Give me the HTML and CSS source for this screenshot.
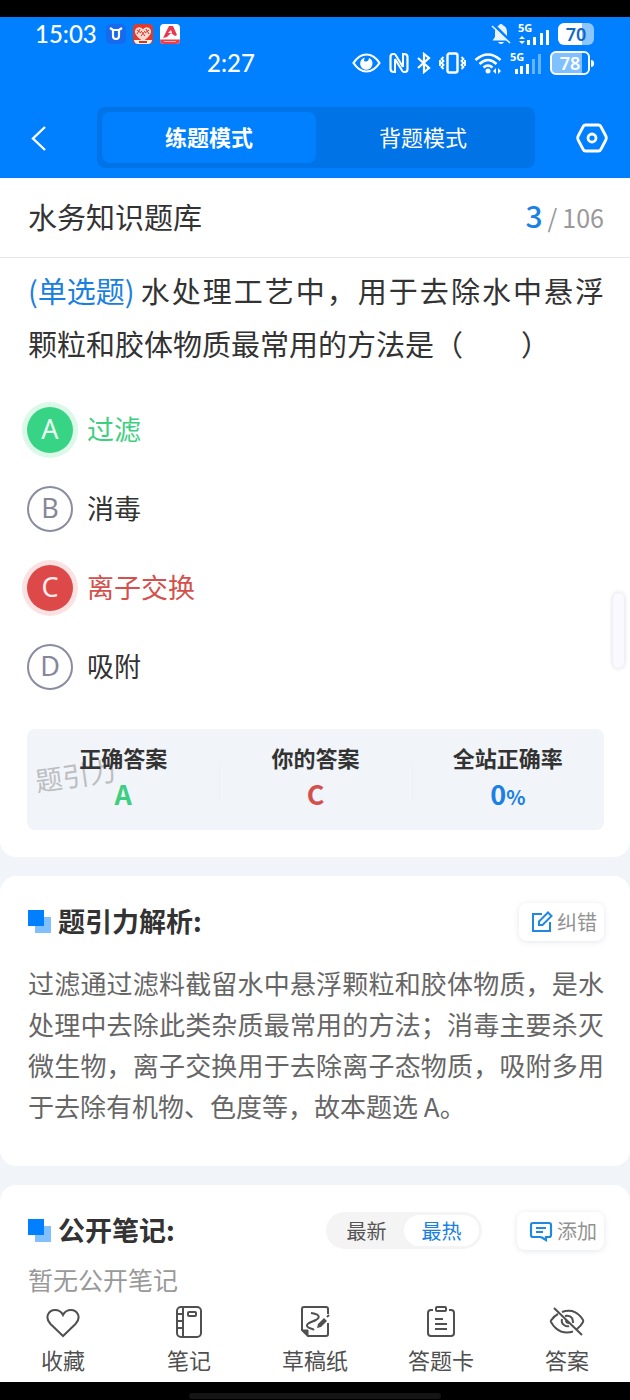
FILE: index.html
```html
<!DOCTYPE html>
<html lang="zh-CN">
<head>
<meta charset="utf-8">
<meta name="viewport" content="width=device-width, initial-scale=1">
<title>水务知识题库</title>
<link rel="stylesheet" href="styles.css">
</head>
<body>
<header class="top">
  <div class="status outer">
    <div class="group">
      <span class="clock">15:03</span>
      <svg class="app" viewBox="0 0 20 20"><rect width="20" height="20" rx="5" fill="#1769ed"/><path d="M4 4l3 2h6l3-2M7 6v6q0 3 3 3t3-3V6" fill="none" stroke="#fff" stroke-width="2.2"/></svg>
      <svg class="app" viewBox="0 0 20 20"><rect width="20" height="20" rx="4" fill="#e03a2c"/><path d="M10 17C2 12 1 8 2.500 5.500 4.500 2 8.500 3 10 5.500 11.500 3 15.500 2 17.500 5.500 19 8 18 12 10 17z" fill="#fbd9cf"/><path d="M4 6l4 3M7 5l-3 5M16 6l-4 3M13 5l3 5M8 7l4 5M12 7l-4 5" stroke="#d8322a" stroke-width="1"/><path d="M1 16h18q-.5 4-4 4H5q-3.500 0-4-4z" fill="#fff0dc"/><path d="M6 18h8" stroke="#d8322a" stroke-width="2"/></svg>
      <svg class="app" viewBox="0 0 20 20"><rect width="20" height="20" rx="4" fill="#fff"/><path d="M3 14L9 2h4l4 9-2 1-4-3-4 4z" fill="#e8384f"/><path d="M8 9l3-3 1 3z" fill="#fff"/><path d="M0 15.500h20q0 4.500-4 4.500H4q-4 0-4-4.500z" fill="#ef3e4a"/><path d="M4 17.500h12" stroke="#fff" stroke-width="1" opacity=".6"/></svg>
    </div>
    <div class="group tight">
      <svg width="20" height="22" viewBox="0 0 20 22"><path d="M10 1q1.500 0 1.800 1.300Q16 4 16 9v5l2.500 3.500h-17L4 14V9Q4 4 8.200 2.300 8.500 1 10 1zM7 19h6q-1 2-3 2t-3-2z" fill="#e9f4ff"/><path d="M2 1l17 17" stroke="#0080ff" stroke-width="3"/><path d="M1 3l18 17" stroke="#e9f4ff" stroke-width="1.600"/></svg>
      <div class="signal"><span class="net">5G</span><svg width="33" height="23" viewBox="0 0 33 23" fill="#fff"><path d="M1 16l3-3 3 3zM1 18l3 3 3-3zM9 17h3v5H9zM15 14h3v8h-3zM22 10h3v12h-3zM28 7h3v15h-3z"/></svg></div>
      <div class="battery full"><span class="charge">70</span></div>
    </div>
  </div>
  <div class="status inner">
    <span class="clock">2:27</span>
    <svg width="29" height="22" viewBox="0 0 29 22"><path d="M1.500 11Q7 2.500 14.500 2.500T27.500 11q-5.500 8.500-13 8.500T1.500 11z" fill="none" stroke="#fff" stroke-width="2.200"/><path d="M13 5.500a6.200 6.200 0 1 0 7.500 5.500Q20 7 17 6q-.5 4-4 3.500-2-.5 0-4z" fill="#fff"/></svg>
    <svg width="20" height="22" viewBox="0 0 20 22" fill="none" stroke="#fff"><path d="M6 2H4Q1.500 2 1.500 5v12q0 3 3.500 3M14 20h2q2.500 0 2.500-3V5Q18.500 2 15 2" stroke-width="2.200"/><path d="M6 21V7M14 15V1" stroke-width="2"/><path d="M6 2l8 13M6 7l8 13" stroke-width="2"/></svg>
    <svg width="14" height="22" viewBox="0 0 14 22" fill="none" stroke="#fff" stroke-width="2.200"><path d="M1 6l11 10-5 4V2l5 4L1 16"/></svg>
    <svg width="27" height="22" viewBox="0 0 27 22" fill="none" stroke="#fff" stroke-width="1.800"><rect x="8.500" y="1.500" width="10" height="19" rx="2" stroke-width="2.400"/><path d="M4.500 5l-2 2 2 2-2 2 2 2-2 2 2 2M22.500 5l2 2-2 2 2 2-2 2 2 2-2 2M1 8v6M26 8v6"/></svg>
    <svg width="28" height="22" viewBox="0 0 28 22" fill="none" stroke="#fff" stroke-width="2.600"><path d="M1.500 8Q14-3 26.500 8M5.500 12Q14 4 22.500 12M9.500 15.500Q14 11.500 18.500 15.500"/><circle cx="14" cy="19" r="2.500" fill="#fff" stroke="none"/><path d="M19 19l3-3v6zM27 19l-3-3v6z" fill="#fff" stroke="none"/></svg>
    <div class="signal"><span class="net">5G</span><svg width="32" height="23" viewBox="0 0 32 23" fill="#fff"><path d="M5 17h3v5H5zM10 14h3v8h-3zM16 12h3v10h-3z"/><path d="M22 7h3v15h-3zM28 2h3v20h-3z" opacity=".4"/></svg></div>
    <div class="battery lined"><span class="charge">78</span></div>
  </div>
  <nav class="modebar">
    <button class="plain" aria-label="返回"><svg width="18" height="28" viewBox="0 0 18 28"><path d="M15 3L3 14.500 15 26" fill="none" stroke="#fff" stroke-width="2.400"/></svg></button>
    <div class="modes"><button class="mode on">练题模式</button><button class="mode">背题模式</button></div>
    <button class="plain end" aria-label="设置"><svg width="32" height="30" viewBox="0 0 32 30" fill="none" stroke="#fff" stroke-width="2.800"><path d="M9.500 2h13q1.500 0 2.300 1.500l5 9.500q1 2 0 4l-5 9.500Q24 28 22.500 28h-13Q8 28 7.200 26.500l-5-9.500q-1-2 0-4l5-9.500Q8 2 9.500 2z"/><circle cx="16" cy="15" r="4"/></svg></button>
  </nav>
</header>

<main class="content">
  <section class="card first">
    <div class="bank"><h1 class="bank-name">水务知识题库</h1><p class="count"><b class="now">3</b><span class="slash">/</span>106</p></div>
    <p class="question"><span class="kind">(单选题)</span>水处理工艺中，用于去除水中悬浮<span class="keep">颗粒</span>和胶体物质最常用的方法是（　　）</p>
    <div class="options">
      <button class="option right"><span class="mark">A</span><span class="label">过滤</span></button>
      <button class="option"><span class="mark">B</span><span class="label">消毒</span></button>
      <button class="option wrong"><span class="mark">C</span><span class="label">离子交换</span></button>
      <button class="option"><span class="mark">D</span><span class="label">吸附</span></button>
    </div>
    <div class="result">
      <dl class="stats">
        <div class="stat"><dt>正确答案</dt><dd class="green">A</dd></div>
        <div class="stat"><dt>你的答案</dt><dd class="red">C</dd></div>
        <div class="stat"><dt>全站正确率</dt><dd class="azure">0<small>%</small></dd></div>
      </dl>
      <span class="watermark">题引力</span>
    </div>
  </section>

  <section class="card">
    <div class="head">
      <svg class="squares" viewBox="0 0 23 23"><path d="M7 7h16v16H7z" fill="#80c0ff"/><path d="M0 0h16v16H0z" fill="#0080ff"/></svg>
      <h2 class="title">题引力解析:</h2>
      <button class="action"><svg width="22" height="22" viewBox="0 0 22 22" fill="none" stroke="#2088e0" stroke-width="2"><path d="M11 3H2v17h17v-9"/><path d="M8 14v-3.500L17 1.500l3.500 3.500-9 9z"/></svg>纠错</button>
    </div>
    <p class="analysis">过滤通过滤料截留水中悬浮颗粒和胶体物质，是水处理中去除此类杂质最常用的方法；消毒主要杀灭微生物，离子交换用于去除离子态物质，吸附多用于去除有机物、色度等，故本题选 A。</p>
  </section>

  <section class="card notes">
    <div class="head">
      <svg class="squares" viewBox="0 0 23 23"><path d="M7 7h16v16H7z" fill="#80c0ff"/><path d="M0 0h16v16H0z" fill="#0080ff"/></svg>
      <h2 class="title">公开笔记:</h2>
      <div class="sort"><button class="pill">最新</button><button class="pill on">最热</button></div>
      <button class="action"><svg width="24" height="22" viewBox="0 0 24 22" fill="none" stroke="#2088e0" stroke-width="2.200"><path d="M12 17H4q-2 0-2-2V5q0-2 2-2h16q2 0 2 2v10q0 2-2 2h-3v3l-5-3M7 8h10M7 12h7"/></svg>添加</button>
    </div>
    <p class="empty">暂无公开笔记</p>
  </section>
</main>

<div class="handle"></div>

<footer class="bottom">
  <nav class="tools">
    <button class="tool"><svg viewBox="0 0 36 36"><path d="M18 32L5.500 20C-1 13 4 6 10 6c4 0 6.500 2 8 5 1.500-3 4-5 8-5 6 0 11 7 4.500 14z"/></svg>收藏</button>
    <button class="tool"><svg viewBox="0 0 36 36"><rect x="6" y="3" width="24" height="30" rx="4"/><path d="M12 3v30M6 10h6M6 17h6M6 24h6"/><rect x="17" y="8" width="8" height="4" rx="1"/></svg>笔记</button>
    <button class="tool"><svg viewBox="0 0 36 36"><path d="M31 10V5q0-2-2-2H7Q5 3 5 5v21l6 6h18q2 0 2-2V19"/><path d="M5 26h6v6z" fill="#505050" stroke-width="1"/><path d="M14 9c8 1 10 4 5 7-4 2-10 3-9 6 1 3 5 2 7 4"/><path d="M20 24l1-4 6-6 3 3-6 6z" fill="#505050" stroke="none"/><path d="M30 13l2-2"/></svg>草稿纸</button>
    <button class="tool"><svg viewBox="0 0 36 36"><path d="M10 6H8Q5 6 5 9v20q0 3 3 3h20q3 0 3-3V9q0-3-3-3h-2"/><rect x="13" y="3" width="10" height="4" rx="1"/><path d="M12 15h8M12 20h12M12 25h12"/></svg>答题卡</button>
    <button class="tool"><svg viewBox="0 0 36 36"><path d="M13 8q5-2 10-1 7 2 11 9 .5 1 0 2-2 4-6 7M9 10q-4 2-7 6.500-.5.500 0 1.500 4 7 10 9.500 6 2 12 0M16 12q5-1 7 2 1 2 1 5M13 15q-1 4 2 6 3 2 5 1M17 16q0 3 3 3M5 4l28 27"/></svg>答案</button>
  </nav>
  <div class="gesture"></div>
</footer>
</body>
</html>
```

FILE: styles.css
```css
* { box-sizing: border-box; }
body {
  margin: 0;
  min-height: 100vh;
  background: #f1f4f8;
  color: #333;
  font-family: "Noto Sans CJK SC", sans-serif;
}
h1, h2, p, dl, dd { margin: 0; }
button { border: 0; padding: 0; background: none; color: inherit; font: inherit; cursor: pointer; }
svg { display: block; flex: none; }

.top { background: #0080ff; color: #fff; border-top: 17px solid #000; }
.status { display: flex; align-items: center; }
.outer { justify-content: space-between; height: 34px; padding: 0 36px 0 35px; }
.inner { justify-content: flex-end; gap: 8px; height: 24px; padding-right: 36px; }
.inner .clock { margin-right: auto; padding-left: 207px; }
.clock { font-family: Lato, sans-serif; font-size: 24px; font-weight: 500; line-height: 24px; }
.group { display: flex; align-items: center; gap: 7px; }
.group .clock { margin-right: 2px; }
.app { width: 20px; height: 20px; }
.signal { position: relative; }
.net { position: absolute; left: 0; top: -2px; font: 700 11px/14px "Noto Sans", sans-serif; }
.charge { font: 600 18px/22px "Noto Sans", sans-serif; }
.battery { display: grid; place-items: center; width: 36px; height: 22px; border-radius: 6px; }
.full { background: linear-gradient(90deg, #fff 24px, #8dc6ff 24px); color: #1268c4; }
.lined { position: relative; width: 40px; height: 24px; margin-right: 4px; border: 2px solid #fff; background: linear-gradient(90deg, #80c0ff 30px, #0080ff 30px); }
.lined::after { content: ""; position: absolute; right: -6px; top: 7px; width: 3px; height: 7px; border-radius: 0 3px 3px 0; background: #fff; }
.lined .charge { line-height: 20px; }

.modebar { display: grid; grid-template-columns: 67px 1fr 73px; align-items: center; height: 103px; padding: 22px 22px 0 30px; }
.plain { display: grid; justify-content: start; }
.end { justify-content: end; }
.modes { display: flex; height: 61px; padding: 5px; border-radius: 8px; background: #0073e6; }
.mode { flex: 1; padding-bottom: 3px; border-radius: 8px; font-size: 22px; }
.mode.on { background: #0080ff; font-weight: 700; }

.content { display: flex; flex-direction: column; gap: 19px; }
.card { padding: 26px 26px 40px 28px; border-radius: 16px; background: #fff; }
.first { padding: 0 0 27px; border-radius: 0 0 16px 16px; }
.bank { display: flex; align-items: center; justify-content: space-between; height: 80px; padding: 0 26px 4px 28px; border-bottom: 1px solid #e4e6e8; }
.bank-name { font-size: 29px; font-weight: 400; line-height: 40px; }
.count { font-size: 25px; line-height: 40px; color: #999; }
.now { font-size: 30px; font-weight: 500; line-height: 40px; color: #1a80e6; }
.slash { margin: 0 5px; }
.question { padding: 6px 26px 0 28px; font-size: 29px; line-height: 53px; text-align: justify; }
.kind { display: inline-block; margin-right: 4px; color: #1a80e0; }
.keep { white-space: nowrap; }

.options { display: flex; flex-direction: column; align-items: flex-start; gap: 33px; padding: 37px 27px 39px; }
.option { display: flex; align-items: center; gap: 14px; height: 46px; font-size: 27px; }
.label { padding-bottom: 3px; }
.mark { display: grid; place-items: center; width: 46px; height: 46px; padding-bottom: 2px; border: 2px solid #8a8ca0; border-radius: 50%; color: #85879a; font: 400 27px/40px "Noto Sans", sans-serif; }
.right { color: #3dcf80; }
.wrong { color: #d4504d; }
.right .mark { border: 0; background: #38d485; color: #e8fff2; box-shadow: 0 0 0 5px #dcf8e9; }
.wrong .mark { border: 0; background: #dd4849; color: #ffecec; box-shadow: 0 0 0 5px #fae2e2; }

.result { position: relative; margin: 0 26px 0 27px; }
.stats { display: flex; height: 101px; padding-top: 12px; border-radius: 8px; background: #f1f4f8; text-align: center; }
.stat { position: relative; z-index: 1; flex: 1; font-size: 22px; font-weight: 700; line-height: 32px; }
.stat + .stat::before { content: ""; position: absolute; left: 0; top: 24px; height: 36px; border-left: 1px solid #eceff3; }
.stat dd { font-size: 27px; line-height: 42px; }
.stat small { font-size: 20px; }
.green { color: #3dcf80; }
.red { color: #d4504d; }
.azure { color: #1a80e6; }
.watermark { position: absolute; left: 8px; top: 26px; color: #bcbec2; font-size: 27px; line-height: 40px; transform: rotate(-8deg); }

.head { display: flex; align-items: center; height: 39px; }
.squares { width: 23px; height: 23px; margin-right: 7px; }
.title { margin-right: auto; padding-bottom: 2px; font-size: 27px; font-weight: 700; line-height: 37px; }
.action { display: flex; align-items: center; gap: 4px; height: 38px; padding: 0 7px 0 12px; border-radius: 8px; background: #fff; box-shadow: 0 1px 6px #e4e6ea; color: #929292; font-size: 20px; }
.analysis { padding-top: 21px; color: #666; font-size: 26px; line-height: 41px; text-align: justify; }
.notes { padding-bottom: 120px; }
.sort { display: flex; margin-right: 35px; height: 37px; padding: 3px; border-radius: 19px; background: #f4f4f4; }
.pill { width: 75px; border-radius: 16px; color: #555; font-size: 20px; line-height: 28px; }
.pill.on { background: #fff; color: #1a80e0; }
.empty { padding-top: 10px; color: #999; font-size: 25px; line-height: 38px; }

.handle { position: fixed; right: 6px; top: 593px; width: 11px; height: 75px; border-radius: 6px; background: #f9f9ff; box-shadow: 0 0 4px 1px #e4e4ea; }
.bottom { position: fixed; left: 0; right: 0; bottom: 0; }
.tools { display: flex; height: 82px; background: #fff; padding-top: 4px; }
.tool { flex: 1; display: flex; flex-direction: column; align-items: center; gap: 5px; color: #505050; font-size: 22px; line-height: 28px; }
.tool svg { width: 36px; height: 36px; fill: none; stroke: #505050; stroke-width: 2; }
.gesture { height: 18px; padding-top: 11px; background: #000; }
.gesture::before { content: ""; display: block; width: 40%; height: 6px; margin: 0 auto; border-radius: 3px; background: #151515; }
```
